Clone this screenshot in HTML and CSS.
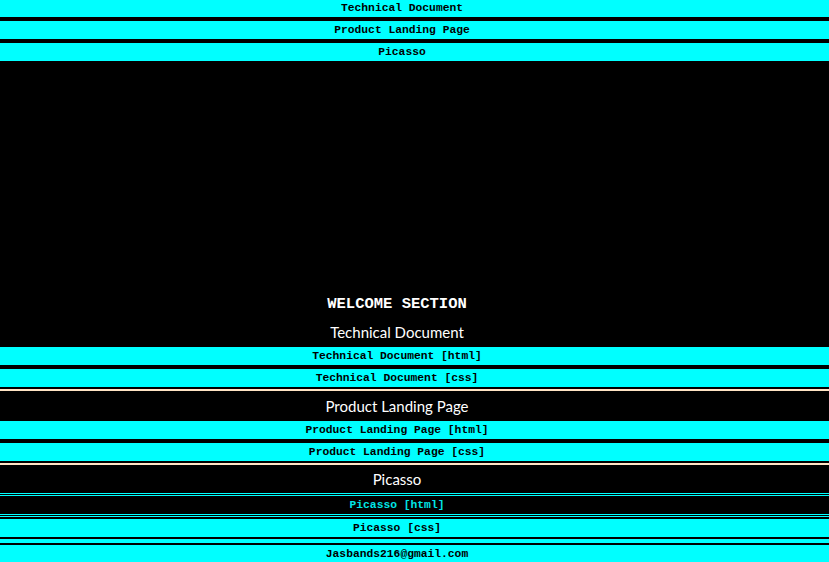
FILE: index.html
```html
<!DOCTYPE html>
<html lang="en">
<head>
<meta charset="utf-8">
<title>Portfolio</title>
<link rel="stylesheet" href="styles.css">
</head>
<body>
<nav class="navbar">
  <a class="nav-link" href="#tech">Technical Document</a>
  <a class="nav-link" href="#product">Product Landing Page</a>
  <a class="nav-link" href="#picasso">Picasso</a>
</nav>
<main class="main">
  <section class="welcome">
    <h1 class="welcome-title">WELCOME SECTION</h1>
  </section>
  <section class="project" id="tech">
    <h2 class="project-title">Technical Document</h2>
    <a class="project-link" href="#">Technical Document [html]</a>
    <a class="project-link" href="#">Technical Document [css]</a>
    <hr class="divider">
  </section>
  <section class="project" id="product">
    <h2 class="project-title">Product Landing Page</h2>
    <a class="project-link" href="#">Product Landing Page [html]</a>
    <a class="project-link" href="#">Product Landing Page [css]</a>
    <hr class="divider">
  </section>
  <section class="project project-last" id="picasso">
    <h2 class="project-title short">Picasso</h2>
    <a class="project-link active" href="#">Picasso [html]</a>
    <a class="project-link" href="#">Picasso [css]</a>
    <div class="cyan-rule"></div>
  </section>
  <footer class="footer">Jasbands216@gmail.com</footer>
</main>
</body>
</html>
```
FILE: styles.css
```css
html, body {
  margin: 0;
  padding: 0;
  background: #000;
}
body {
  font-family: "Liberation Mono", "Courier New", monospace;
  overflow: hidden;
}
a {
  text-decoration: none;
}
.navbar {
  display: flex;
  flex-direction: column;
  gap: 4px;
  margin-top: -1px;
}
.nav-link,
.project-link,
.footer {
  display: block;
  height: 18px;
  line-height: 18px;
  background: #00ffff;
  color: #000;
  text-align: center;
  font-size: 11.3px;
  font-weight: bold;
  padding-right: 35px;
}
.nav-link {
  padding-right: 25px;
}
.main {
  display: flex;
  flex-direction: column;
}
.welcome {
  height: 256px;
  display: flex;
  flex-direction: column;
  justify-content: flex-end;
}
.welcome-title {
  margin: 0 0 3px;
  padding-right: 35px;
  height: 20px;
  line-height: 20px;
  color: #fff;
  text-align: center;
  font-size: 15.5px;
  font-weight: bold;
  font-family: "Liberation Mono", "Courier New", monospace;
}
.project {
  display: flex;
  flex-direction: column;
}
.project-title {
  margin: 0;
  padding-right: 35px;
  height: 30px;
  line-height: 30px;
  text-align: center;
  color: #fff;
  font-family: Lato, "Liberation Sans", sans-serif;
  font-size: 15px;
  font-weight: normal;
}
.project-title.short {
  height: 28px;
  line-height: 28px;
}
.project-link + .project-link {
  margin-top: 4px;
}
.project-link.active {
  background: #000;
  color: #00e6e6;
  border-top: 3px double #00ffff;
  border-bottom: 3px double #00ffff;
}
.project-link.active + .project-link {
  margin-top: 2px;
}
.divider {
  margin: 2px 0 0;
  height: 0;
  border: none;
  border-top: 2px solid #ffe4c4;
}
.cyan-rule {
  margin: 2px 0;
  height: 4px;
  background: #00ffff;
}
.footer {
  height: 18px;
}
```
